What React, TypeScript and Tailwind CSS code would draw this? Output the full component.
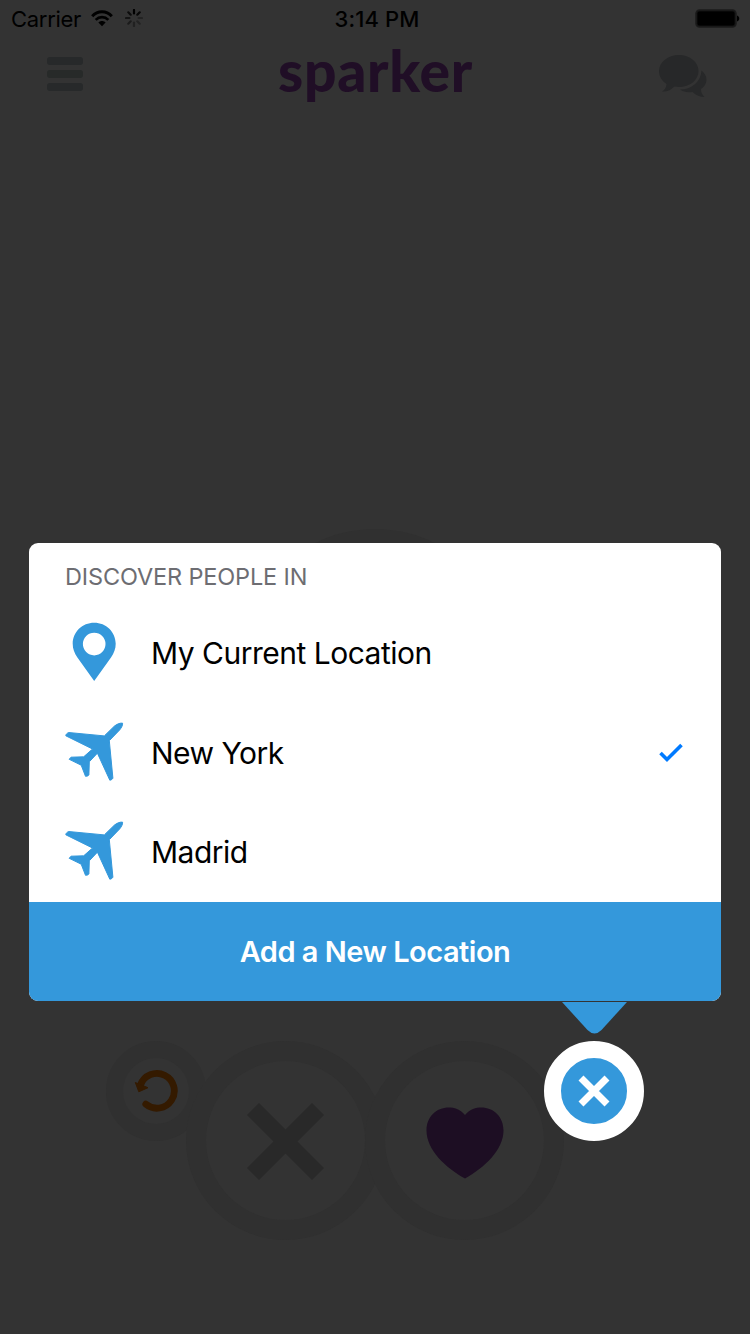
import clsx from "clsx";

type IconProps = { className?: string };

const locations = [
  { name: "My Current Location", current: true, selected: false },
  { name: "New York", current: false, selected: true },
  { name: "Madrid", current: false, selected: false },
];

function WifiIcon() {
  return (
    <svg className="w-[22px] h-[17px] -mt-[2px]" viewBox="0 0 22 17" fill="none" stroke="#000">
      <path d="M1.2 6.2C6.6.4 15.4.4 20.8 6.2" strokeWidth="3" />
      <path d="M4.7 9.9C8.2 6.3 13.8 6.3 17.3 9.9" strokeWidth="2.7" />
      <path d="M7.4 12.6c2-2 5.2-2 7.2 0L11 16.3z" fill="#000" stroke="none" />
    </svg>
  );
}

function Spinner() {
  return (
    <svg className="-mt-[2px] w-[18px] h-[18px]" viewBox="-9 -9 18 18" stroke="#000" strokeWidth="2.2" strokeLinecap="round">
      <path d="M0-4.6V-8" />
      <path d="M3.3-3.3 5.7-5.7" opacity=".85" />
      <path d="M4.6 0H8" opacity=".3" />
      <path d="M3.3 3.3 5.7 5.7" opacity=".3" />
      <path d="M0 4.6V8" opacity=".35" />
      <path d="M-3.3 3.3-5.7 5.7" opacity=".45" />
      <path d="M-4.6 0H-8" opacity=".6" />
      <path d="M-3.3-3.3-5.7-5.7" opacity=".75" />
    </svg>
  );
}

function BatteryIcon() {
  return (
    <svg className="w-[45px] h-[19px] -mt-px" viewBox="0 0 45 19">
      <rect x="1" y="1" width="40" height="17" rx="3.5" fill="#111" stroke="#1b1b1b" strokeWidth="1.5" />
      <rect x="2.5" y="2.5" width="37" height="14" rx="2" fill="#000" />
      <path d="M42 6.5c3 .8 3 5.200 0 6z" fill="#000" />
    </svg>
  );
}

function ChatIcon() {
  return (
    <svg className="mt-[4px] w-[48px] h-[43px]" viewBox="0 0 48 43" fill="#272829">
      <path d="M20 0C31 0 39.500 7 39.500 16S31 32 20 32c-1.500 0-3-.1-4.500-.4C12 35 8 37 3 36.500c2.500-1.500 4.500-4 4.500-7.500C3 26 0 21.500 0 16 0 7 9 0 20 0z" />
      <path d="M42.500 15.500c3 2.500 5 5.500 5 9.300 0 4-2.300 7-5.500 9.200-.1 3.500 1.300 5.800 3.500 8-4.500 0-8.500-1.500-12-5-5 .6-9 0-12.500-2.500C32.500 34.500 42 27 42.500 15.500z" />
    </svg>
  );
}

function PinIcon({ className }: IconProps) {
  return (
    <svg className={className} viewBox="0 0 60 60" fill="#3498db">
      <path
        fillRule="evenodd"
        d="M29.200.8C41.100.8 50.700 10 50.700 21.800c0 5.200-1.700 9.200-4.700 13.700L29.200 59 12.400 35.500c-3-4.500-4.700-8.500-4.700-13.700C7.700 10 17.300.8 29.200.8zm0 10a11.300 11.300 0 1 0 0 22.600 11.300 11.300 0 0 0 0-22.600z"
      />
    </svg>
  );
}

function PlaneIcon({ className }: IconProps) {
  return (
    <svg className={className} viewBox="0 0 60 60" fill="#3498db" stroke="#3498db" strokeWidth="1" strokeLinejoin="round">
      <path d="M57.600 1.200C55.500.8 52.500 1.700 49.500 4L39.300 13.900 3.500 10.500C2 11.300.8 12.300.8 13.800L27.500 27 18.700 34.800 6 35.200 4.200 37.300 16.200 43.200 20.500 54.300C22 54.400 23.200 53.800 23.900 53L24.300 39.800 32.400 31.200 44.800 58.200C46.500 58 47.500 57 47.900 56.200L44.300 18.700 54.600 8C56.600 5.500 57.700 3.500 57.600 1.200z" />
    </svg>
  );
}

function UndoIcon() {
  return (
    <svg className="w-[44px] h-[44px] shrink-0" viewBox="0 0 44 44">
      <path d="M11.800 35.200A17.400 17.400 0 1 0 6.500 16" fill="none" stroke="#341a00" strokeWidth="6.800" strokeLinecap="round" />
      <path d="M1.300 13.500 14 18.700 4.800 22.800z" fill="#341a00" stroke="#341a00" strokeWidth="1" strokeLinejoin="round" />
    </svg>
  );
}

function StatusBar() {
  return (
    <div className="grid grid-cols-3 h-[38px] items-center pl-[11px] pr-[10px] text-[22px] leading-none">
      <div className="flex items-center">
        <span className="w-[80px] tracking-[-0.3px]">Carrier</span>
        <WifiIcon />
        <span className="ml-[12px]">
          <Spinner />
        </span>
      </div>
      <span className="pl-[3px] text-center font-medium tracking-[0.1px]">3:14 PM</span>
      <span className="flex justify-end">
        <BatteryIcon />
      </span>
    </div>
  );
}

function Header() {
  return (
    <header className="flex h-[72px] items-center justify-between pl-[47px] pr-[43px]">
      <div className="flex w-[48px] flex-col gap-[5px]">
        <span className="h-[8px] w-[36px] rounded-[3px] bg-[#27292a]" />
        <span className="h-[8px] w-[36px] rounded-[3px] bg-[#272a29]" />
        <span className="h-[8px] w-[36px] rounded-[3px] bg-[#27292a]" />
      </div>
      <h1 className="-mt-[8px] pr-[3px] font-[Lato,sans-serif] text-[57px] font-black leading-[72px] tracking-[0.7px] text-[#200e26]">
        sparker
      </h1>
      <ChatIcon />
    </header>
  );
}

function LocationCard() {
  return (
    <section className="relative mx-[29px] flex h-[458px] flex-col overflow-hidden rounded-[9px] bg-white">
      <h2 className="h-[60px] pl-[36px] pt-[4px] text-[23.500px] leading-[60px] tracking-[-0.150px] text-[#6d6d72]">
        DISCOVER PEOPLE IN
      </h2>
      <ul className="flex flex-1 flex-col">
        {locations.map((location) => (
          <li key={location.name} className="flex flex-1 items-center pl-[36px] pr-[38px]">
            {location.current ? (
              <PinIcon className="-mt-[2px] mr-[26px] size-[60px]" />
            ) : (
              <PlaneIcon className="-mt-[2px] mr-[26px] size-[60px]" />
            )}
            <span className="flex-1 text-[30px] leading-none tracking-[-0.500px]">{location.name}</span>
            {location.selected && (
              <svg className="w-[24px] h-[20px]" viewBox="0 0 24 20" fill="none" stroke="#007aff" strokeWidth="3.600">
                <path d="M1.500 10 8 16.500 22.500 2" />
              </svg>
            )}
          </li>
        ))}
      </ul>
      <button className="h-[99px] bg-[#3498db] pt-px text-[29px] font-semibold leading-[98px] tracking-[-0.500px] text-white">
        Add a New Location
      </button>
    </section>
  );
}

function Ring({ small, className, children }: { small?: boolean; className?: string; children: React.ReactNode }) {
  return (
    <div
      className={clsx(
        "flex shrink-0 items-center justify-center rounded-full",
        small ? "size-[100px] border-[17px]" : "size-[199px] border-[20px]",
        className ?? "border-[#303030]"
      )}
    >
      {children}
    </div>
  );
}

function Actions() {
  return (
    <div className="flex items-start pl-[106px]">
      <Ring small>
        <UndoIcon />
      </Ring>
      <div className="-ml-[20px] flex">
        <Ring>
          <svg className="mt-px size-[77px]" viewBox="0 0 77 77" stroke="#292929" strokeWidth="17">
            <path d="M6 6 71 71M71 6 6 71" />
          </svg>
        </Ring>
      </div>
      <div className="-ml-[20px] flex">
        <Ring>
          <svg className="mt-[5px] h-[72px] w-[78px]" viewBox="0 0 78 72" fill="#1d0e23">
            <path d="M39 8C44 2 50 .5 55 .5 68 .5 77.500 10 77.500 23.500 77.500 43 58 61 39 71.500 20 61 .5 43 .5 23.500.5 10 10 .5 23 .5 28 .5 34 2 39 8z" />
          </svg>
        </Ring>
      </div>
      <div className="-ml-[20px] flex">
        <Ring small className="border-white bg-[#3498db]">
          <svg className="size-[32px]" viewBox="0 0 32 32" stroke="#fff" strokeWidth="7">
            <path d="M3 3 29 29M29 3 3 29" />
          </svg>
        </Ring>
      </div>
    </div>
  );
}

export default function App() {
  return (
    <main className="flex h-[1334px] w-[750px] flex-col overflow-hidden bg-[#333] font-[Inter,sans-serif] text-black">
      <StatusBar />
      <Header />
      <div className="relative mt-auto">
        <div className="absolute left-[240px] -top-[14px] size-[270px] rounded-full bg-[#303030]" />
        <LocationCard />
        <svg className="mt-px ml-[561px] block h-[32px] w-[67px]" viewBox="0 0 67 32" fill="#3498db">
          <path d="M1 0H66L40.500 28Q33.500 35 26.500 28z" />
        </svg>
      </div>
      <div className="mt-[7px] mb-[94px]">
        <Actions />
      </div>
    </main>
  );
}
